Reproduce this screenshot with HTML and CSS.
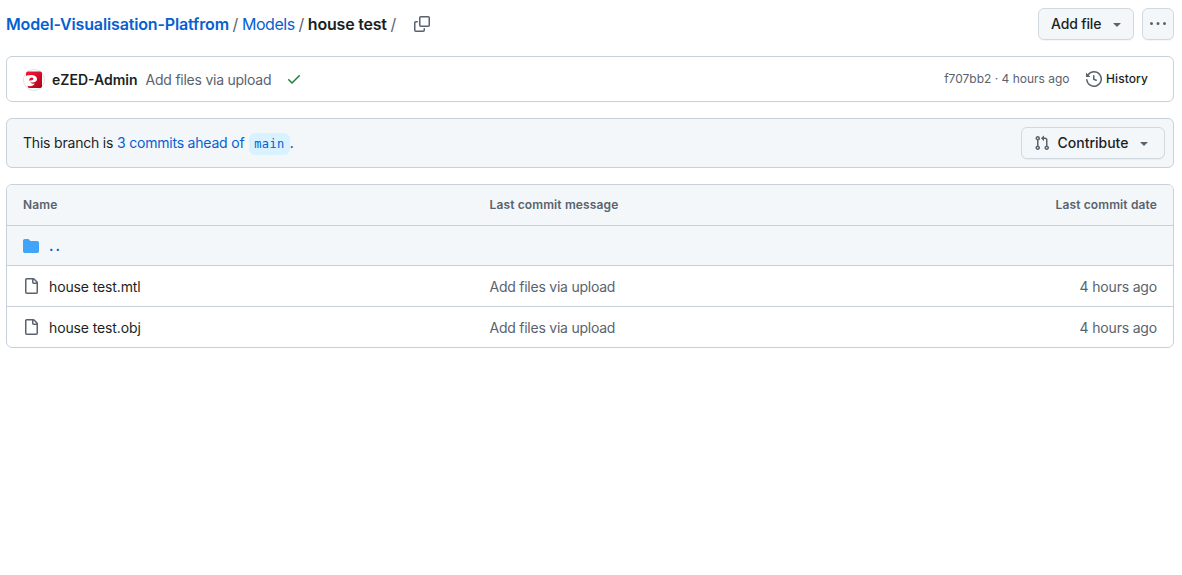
FILE: index.html
```html
<!DOCTYPE html>
<html lang="en">
<head>
<meta charset="utf-8">
<title>house test</title>
<link rel="stylesheet" href="styles.css">
</head>
<body>
<svg class="sprite" aria-hidden="true">
  <symbol id="caret" viewBox="0 0 16 16"><path d="m4.427 7.427 3.396 3.396a.25.25 0 0 0 .354 0l3.396-3.396A.25.25 0 0 0 11.396 7H4.604a.25.25 0 0 0-.177.427Z"/></symbol>
  <symbol id="file" viewBox="0 0 16 16"><path d="M2 1.75C2 .784 2.784 0 3.75 0h6.586c.464 0 .909.184 1.237.513l2.914 2.914c.329.328.513.773.513 1.237v9.586A1.75 1.75 0 0 1 13.25 16h-9.5A1.75 1.75 0 0 1 2 14.25Zm1.75-.25a.25.25 0 0 0-.25.25v12.5c0 .138.112.25.25.25h9.5a.25.25 0 0 0 .25-.25V6h-2.75A1.75 1.75 0 0 1 9 4.25V1.5Zm6.75.062V4.25c0 .138.112.25.25.25h2.688l-.011-.013-2.914-2.914-.013-.011Z"/></symbol>
</svg>
<main class="page">
  <header class="topbar">
    <nav class="crumbs">
      <a class="repo">Model-Visualisation-Platfrom</a><span class="sep">/</span><a class="dir">Models</a><span class="sep">/</span><h1 class="current">house test</h1><span class="sep">/</span>
      <svg class="icon copy" viewBox="0 0 16 16"><path d="M0 6.75C0 5.784.784 5 1.75 5h1.5a.75.75 0 0 1 0 1.5h-1.5a.25.25 0 0 0-.25.25v7.5c0 .138.112.25.25.25h7.5a.25.25 0 0 0 .25-.25v-1.5a.75.75 0 0 1 1.5 0v1.5A1.75 1.75 0 0 1 9.25 16h-7.5A1.75 1.75 0 0 1 0 14.25Z"/><path d="M5 1.75C5 .784 5.784 0 6.75 0h7.5C15.216 0 16 .784 16 1.75v7.5A1.75 1.75 0 0 1 14.25 11h-7.5A1.75 1.75 0 0 1 5 9.25Zm1.75-.25a.25.25 0 0 0-.25.25v7.5c0 .138.112.25.25.25h7.5a.25.25 0 0 0 .25-.25v-7.5a.25.25 0 0 0-.25-.25Z"/></svg>
    </nav>
    <div class="actions">
      <button class="btn add"><span class="add-label">Add file</span><svg class="icon"><use href="#caret"/></svg></button>
      <button class="btn more" aria-label="More options"><svg class="icon dots" viewBox="0 0 16 16"><path d="M8 9a1.5 1.5 0 1 0 0-3 1.5 1.5 0 0 0 0 3ZM1.5 9a1.5 1.5 0 1 0 0-3 1.5 1.5 0 0 0 0 3Zm13 0a1.5 1.5 0 1 0 0-3 1.5 1.5 0 0 0 0 3Z"/></svg></button>
    </div>
  </header>

  <section class="box commit">
    <svg class="avatar" viewBox="0 0 22 22">
      <defs><linearGradient id="red" x1="0" y1="0" x2="1" y2="1"><stop offset="0" stop-color="#ff1438"/><stop offset="1" stop-color="#a9041c"/></linearGradient></defs>
      <circle cx="11" cy="11" r="10.5" fill="#fff" stroke="#dfe1e4"/>
      <path d="M3 4.500Q3 2.500 5 2.500h12q2 0 2 2v13.500l-1.500 1H6.500q-1.500 0-1.700-1.500L3 12Z" fill="url(#red)"/>
      <path d="M1.200 8.500c1.500-1.800 3.700-2.500 6.300-2.500 3.700 0 6.500 1.500 6.500 4.100 0 2.200-1.900 3.500-4.500 3.500H7.300c.8 1 2.500 1.300 4.400.8-.8 1.900-2.600 2.700-4.700 2.800-2.400 0-4.500-1-5.500-3.200Z" fill="#fff"/>
      <path d="M6 11.400c.3-1.800 1.300-3 2.700-3 1 0 1.700.6 1.700 1.300 0 1.100-1.200 1.700-2.600 1.700Z" fill="#e3122f"/>
    </svg>
    <a class="author">eZED-Admin</a>
    <span class="message">Add files via upload</span>
    <svg class="icon check" viewBox="0 0 16 16"><path d="M13.78 4.22a.75.75 0 0 1 0 1.06l-7.25 7.25a.75.75 0 0 1-1.060 0L2.220 9.280a.751.751 0 0 1 .018-1.042.751.751 0 0 1 1.042-.018L6 10.940l6.720-6.720a.75.75 0 0 1 1.060 0Z"/></svg>
    <span class="meta">f707bb2 · 4 hours ago</span>
    <svg class="icon" viewBox="0 0 16 16"><path d="m.427 1.927 1.215 1.215a8.002 8.002 0 1 1-1.600 5.685.75.75 0 1 1 1.493-.154 6.500 6.500 0 1 0 1.180-4.458l1.358 1.358A.25.25 0 0 1 3.896 6H.25A.25.25 0 0 1 0 5.750V2.104a.25.25 0 0 1 .427-.177ZM7.750 4a.75.75 0 0 1 .75.75v2.992l2.028.812a.75.75 0 0 1-.557 1.392l-2.500-1A.751.751 0 0 1 7 8.250v-3.500A.75.75 0 0 1 7.750 4Z"/></svg>
    <a class="history">History</a>
  </section>

  <section class="box branch">
    <p class="ahead">This branch is <a>3 commits ahead of</a> <code>main</code>.</p>
    <button class="btn contribute">
      <svg class="icon pull" viewBox="0 0 16 16"><path d="M1.500 3.250a2.250 2.250 0 1 1 3 2.122v5.256a2.251 2.251 0 1 1-1.500 0V5.372A2.250 2.250 0 0 1 1.500 3.250Zm5.677-.177L9.573.677A.25.25 0 0 1 10 .854V2.500h1A2.500 2.500 0 0 1 13.500 5v5.628a2.251 2.251 0 1 1-1.500 0V5a1 1 0 0 0-1-1h-1v1.646a.25.25 0 0 1-.427.177L7.177 3.427a.25.25 0 0 1 0-.354ZM3.750 2.500a.75.75 0 1 0 0 1.500.75.75 0 0 0 0-1.500Zm0 9.500a.75.75 0 1 0 0 1.500.75.75 0 0 0 0-1.500Zm8.250.75a.75.75 0 1 0 1.500 0 .75.75 0 0 0-1.500 0Z"/></svg>
      <span class="contribute-label">Contribute</span><svg class="icon"><use href="#caret"/></svg>
    </button>
  </section>

  <section class="box listing">
    <div class="row head"><span class="h-name">Name</span><span class="h-msg">Last commit message</span><span class="h-date">Last commit date</span></div>
    <div class="row parent"><a class="name up"><svg class="icon folder" viewBox="0 0 16 16"><path d="M1.750 1A1.750 1.750 0 0 0 0 2.750v10.500C0 14.216.784 15 1.750 15h12.500A1.750 1.750 0 0 0 16 13.250v-8.500A1.750 1.750 0 0 0 14.250 3H7.500a.25.25 0 0 1-.2-.1l-.9-1.200C6.070 1.260 5.550 1 5 1H1.750Z"/></svg><span class="dotdot">..</span></a></div>
    <div class="row"><a class="name"><svg class="icon"><use href="#file"/></svg><span class="file-label">house test.mtl</span></a><span class="msg">Add files via upload</span><span class="date">4 hours ago</span></div>
    <div class="row"><a class="name"><svg class="icon"><use href="#file"/></svg><span class="file-label">house test.obj</span></a><span class="msg">Add files via upload</span><span class="date">4 hours ago</span></div>
  </section>
</main>
</body>
</html>
```
FILE: styles.css
```css
* { box-sizing: border-box; }
body {
  margin: 0;
  background: #fff;
  color: #1b1f24;
  font: 14px/20px Inter, "Liberation Sans", sans-serif;
}
.sprite { display: none; }
.page {
  display: flex;
  flex-direction: column;
  gap: 16px;
  padding: 8px 8px 0 6px;
}
.icon { width: 16px; height: 16px; flex: none; fill: #59636e; }
.topbar { display: flex; justify-content: space-between; height: 32px; }
.crumbs { display: flex; align-items: center; font-size: 16px; line-height: 24px; white-space: nowrap; }
.repo { color: #0560d2; font-weight: 600; letter-spacing: -0.14px; }
.dir { color: #0560d2; letter-spacing: -0.42px; }
.sep { color: #59636e; padding: 0 3.6px; }
.current { margin: 0; font-size: 16px; font-weight: 600; letter-spacing: -0.2px; }
.copy { margin-left: 14.2px; }
.actions { display: flex; gap: 8px; }
.btn {
  display: flex;
  align-items: center;
  height: 32px;
  padding: 0 8px 0 12px;
  border: 1px solid #d1d9e0;
  border-radius: 6px;
  background: #f3f7fa;
  color: #1b1f24;
  font: 500 14px/20px Inter, "Liberation Sans", sans-serif;
  white-space: nowrap;
  box-shadow: 0 1px 0 #1f23280a;
}
.add { width: 96px; justify-content: space-between; }
.add-label { letter-spacing: -0.15px; }
.more { width: 32px; padding: 0; justify-content: center; }
.contribute { width: 144px; padding-right: 12px; }
.contribute-label { margin: 0 auto 0 7.5px; }
.box { border: 1px solid #c8d1da; border-radius: 6px; }
.commit { display: flex; align-items: center; height: 46px; padding: 0 25px 0 16px; white-space: nowrap; }
.avatar { width: 22px; height: 22px; flex: none; margin-top: 1px; }
.author { margin-left: 7px; padding-top: 2px; font-weight: 600; }
.message { margin-left: 8px; padding-top: 2px; color: #59636e; letter-spacing: -0.24px; }
.check { margin-left: 15px; fill: #1a7f37; }
.meta { margin: 0 16.5px 0 auto; color: #59636e; font-size: 12px; }
.history { margin-left: 4px; font-size: 12px; font-weight: 500; letter-spacing: 0.08px; }
.branch {
  display: flex;
  align-items: center;
  justify-content: space-between;
  height: 50px;
  padding: 0 8px 0 16px;
  background: #f3f7fa;
}
.ahead { margin: 0; padding-top: 2px; letter-spacing: -0.2px; }
.ahead a { color: #0560d2; }
.ahead code {
  display: inline-block;
  margin-left: 1px;
  padding: 0 5px;
  border-radius: 6px;
  background: #d8f2ff;
  color: #0560d2;
  font: 12px/22px "DejaVu Sans Mono", monospace;
  letter-spacing: 0.4px;
}
.listing { height: 164px; overflow: hidden; }
.row {
  display: grid;
  grid-template-columns: 466.5px 1fr auto;
  align-items: center;
  height: 41px;
  padding: 0 16px;
  border-top: 1px solid #c8d1da;
}
.head { height: 40px; border-top: 0; background: #f3f7fa; color: #59636e; font-size: 12px; font-weight: 600; letter-spacing: 0.13px; }
.parent { height: 40px; background: #f3f7fa; }
.name { display: flex; align-items: center; gap: 10px; }
.file-label { padding-top: 2px; letter-spacing: -0.12px; }
.up { color: #0560d2; font-weight: 600; }
.folder { fill: #40a4fb; }
.dotdot { letter-spacing: 2px; }
.msg, .date { padding-top: 2px; color: #59636e; }
.msg { letter-spacing: -0.24px; }
.date { letter-spacing: -0.18px; }
```
